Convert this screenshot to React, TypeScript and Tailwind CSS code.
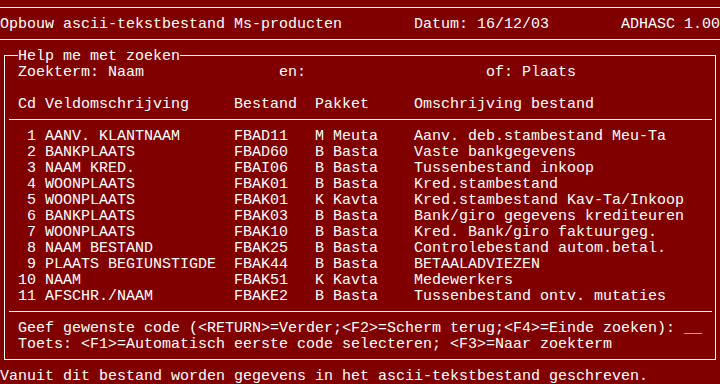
import React from 'react';

type Row = [string, string, string, string, string, string];

// Zoekresultaten: code, veld, bestand, pakket-letter, pakket, omschrijving
const rows: Row[] = [
  ['1', 'AANV. KLANTNAAM', 'FBAD11', 'M', 'Meuta', 'Aanv. deb.stambestand Meu-Ta'],
  ['2', 'BANKPLAATS', 'FBAD60', 'B', 'Basta', 'Vaste bankgegevens'],
  ['3', 'NAAM KRED.', 'FBAI06', 'B', 'Basta', 'Tussenbestand inkoop'],
  ['4', 'WOONPLAATS', 'FBAK01', 'B', 'Basta', 'Kred.stambestand'],
  ['5', 'WOONPLAATS', 'FBAK01', 'K', 'Kavta', 'Kred.stambestand Kav-Ta/Inkoop'],
  ['6', 'BANKPLAATS', 'FBAK03', 'B', 'Basta', 'Bank/giro gegevens krediteuren'],
  ['7', 'WOONPLAATS', 'FBAK10', 'B', 'Basta', 'Kred. Bank/giro faktuurgeg.'],
  ['8', 'NAAM BESTAND', 'FBAK25', 'B', 'Basta', 'Controlebestand autom.betal.'],
  ['9', 'PLAATS BEGIUNSTIGDE', 'FBAK44', 'B', 'Basta', 'BETAALADVIEZEN'],
  ['10', 'NAAM', 'FBAK51', 'K', 'Kavta', 'Medewerkers'],
  ['11', 'AFSCHR./NAAM', 'FBAKE2', 'B', 'Basta', 'Tussenbestand ontv. mutaties'],
];

const formatRow = ([cd, veld, bestand, pk, pakket, omschr]: Row) =>
  `${cd.padStart(2)} ${veld.padEnd(21)}${bestand.padEnd(9)}${pk} ${pakket.padEnd(9)}${omschr}`;

// horizontal rule drawn through the middle of one 16px text row
const Line = ({ inset = false }: { inset?: boolean }) => (
  <div className={inset ? 'h-4 pt-[7px] pl-[4px] pr-[3px]' : 'h-4 pt-[7px]'}>
    <div className="h-px bg-white" />
  </div>
);

const Text = ({ children }: { children: React.ReactNode }) => (
  <div className="h-4 pt-[1px] whitespace-pre">{children}</div>
);

export default function App() {
  return (
    <div
      className="w-[720px] h-[384px] overflow-hidden bg-[#800000] text-white text-[15px] leading-4"
      style={{ fontFamily: '"Liberation Mono", "DejaVu Sans Mono", monospace' }}
    >
      <Line />
      <Text>{'Opbouw ascii-tekstbestand Ms-producten        Datum: 16/12/03        ADHASC 1.00'}</Text>
      <Line />

      <div className="mt-[7px] ml-[4px] w-[712px] border border-white pb-[7px]">
        <div className="-mt-[8px] h-4 pl-[13px] flex">
          <span className="bg-[#800000] pt-[1px] whitespace-pre">Help me met zoeken</span>
        </div>
        <div className="pl-[13px]">
          <Text>{'Zoekterm: Naam               en:                    of: Plaats'}</Text>
          <Text>{' '}</Text>
          <Text>{'Cd Veldomschrijving     Bestand  Pakket     Omschrijving bestand'}</Text>
        </div>
        <Line inset />
        <div className="pl-[13px]">
          {rows.map((r) => (
            <Text key={r[0]}>{formatRow(r)}</Text>
          ))}
        </div>
        <Line inset />
        <div className="pl-[13px]">
          <Text>{'Geef gewenste code (<RETURN>=Verder;<F2>=Scherm terug;<F4>=Einde zoeken): __'}</Text>
          <Text>{'Toets: <F1>=Automatisch eerste code selecteren; <F3>=Naar zoekterm'}</Text>
        </div>
      </div>

      <div className="mt-[8px]">
        <Text>{'Vanuit dit bestand worden gegevens in het ascii-tekstbestand geschreven.'}</Text>
      </div>
    </div>
  );
}
